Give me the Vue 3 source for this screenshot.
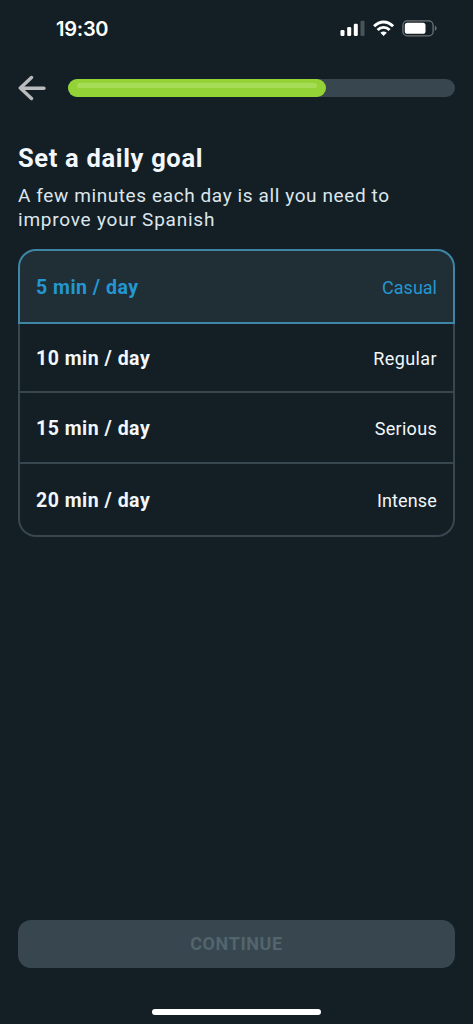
<script setup>
const options = [
  { id: 'five', time: '5 min / day', level: 'Casual', selected: true },
  { id: 'ten', time: '10 min / day', level: 'Regular' },
  { id: 'fifteen', time: '15 min / day', level: 'Serious' },
  { id: 'twenty', time: '20 min / day', level: 'Intense' },
]
const progress = 66.7
</script>

<template>
  <main class="screen">
    <header class="status">
      <span class="clock">19:30</span>
      <svg class="indicators" width="98" height="18" viewBox="0 0 98 18">
        <g fill="#fff">
          <rect x="0.5" y="10" width="4" height="6" rx="1.2" />
          <rect x="7.2" y="7" width="4" height="9" rx="1.2" />
          <rect x="13.8" y="3.8" width="4" height="12.2" rx="1.2" />
          <rect x="20.5" y="0.7" width="4" height="15.3" rx="1.2" fill="#48535a" />
        </g>
        <g fill="none" stroke="#fff" stroke-width="2.9">
          <path d="M34.1 6.3C39.6 0.6 47.6 0.6 53.1 6.3" />
          <path d="M37.6 10C41.1 6.5 46.1 6.5 49.6 10" />
        </g>
        <path d="M40.4 12.7Q43.6 10.1 46.8 12.7L43.6 16Z" fill="#fff" />
        <rect x="62.9" y="0.9" width="30.2" height="14.9" rx="4.4" fill="none" stroke="#6c7479" stroke-width="1.3" />
        <rect x="64.8" y="2.8" width="20.7" height="11" rx="2.6" fill="#fff" />
        <path d="M94.9 5.6Q96.6 6.5 96.6 8.3T94.9 11Z" fill="#6c7479" />
      </svg>
    </header>

    <nav class="topbar">
      <svg class="back" width="28" height="26" viewBox="0 0 28 26">
        <path d="M13.5 2.5L2.3 13L13.5 23.5M3 13.3H26" fill="none" stroke="#b9bbbd" stroke-width="3.4" stroke-linecap="round" stroke-linejoin="round" />
      </svg>
      <div class="track">
        <div class="fill" :style="{ width: progress + '%' }"><div class="shine"></div></div>
      </div>
    </nav>

    <h1 class="title">Set a daily goal</h1>
    <p class="subtitle"><span class="line first">A few minutes each day is all you need to</span> <span class="line second">improve your Spanish</span></p>

    <ul class="options">
      <li v-for="o in options" :key="o.id" class="option" :class="{ selected: o.selected }">
        <span class="time">{{ o.time }}</span>
        <span class="level" :class="o.id">{{ o.level }}</span>
      </li>
    </ul>

    <button class="continue" disabled>CONTINUE</button>
    <div class="home"></div>
  </main>
</template>

<style>
body {
  background: #141f25;
}
</style>

<style scoped>
.screen {
  box-sizing: border-box;
  height: 1024px;
  width: 473px;
  padding: 0 18px;
  display: flex;
  flex-direction: column;
  background: #141f25;
  color: #f1f7fb;
  font-family: Roboto, "Liberation Sans", sans-serif;
  overflow: hidden;
}
.status {
  height: 57px;
  flex: none;
  display: flex;
  justify-content: space-between;
  padding: 0 17px 0 38px;
}
.clock {
  margin-top: 17px;
  font: 600 20px/24px Inter, sans-serif;
  letter-spacing: -0.25px;
  color: #fff;
}
.indicators {
  margin-top: 20px;
}
.topbar {
  height: 62px;
  flex: none;
  display: flex;
  align-items: center;
}
.back {
  flex: none;
  margin-right: 21.5px;
}
.track {
  flex: 1;
  height: 18px;
  border-radius: 9px;
  background: #38464f;
}
.fill {
  box-sizing: border-box;
  height: 18px;
  padding: 4px 9px;
  border-radius: 9px;
  background: #94d336;
}
.shine {
  height: 5px;
  border-radius: 2.5px;
  background: #a7dc59;
}
.title {
  margin: 24px 0 0;
  font-size: 25.5px;
  line-height: 30px;
  font-weight: 700;
  letter-spacing: 0.67px;
}
.subtitle {
  margin: 11px 0 0;
  font-size: 19px;
  line-height: 24.3px;
  color: #dce6ec;
}
.line {
  display: block;
  white-space: nowrap;
}
.first {
  letter-spacing: 0.6px;
}
.second {
  letter-spacing: 0.77px;
}
.options {
  list-style: none;
  box-sizing: border-box;
  height: 287.5px;
  flex: none;
  margin: 16.5px 0 0;
  padding: 0;
}
.option {
  box-sizing: border-box;
  height: 71px;
  padding: 2px 16px 0;
  border: 2px solid #38464f;
  border-top: 0;
  display: flex;
  align-items: center;
  justify-content: space-between;
}
.option.selected {
  height: 75px;
  border: 2px solid #3f85a6;
  border-radius: 18px 18px 0 0;
  background: #202f36;
  color: #2496d1;
}
.option:nth-child(2) {
  height: 68.5px;
}
.option:last-child {
  height: 73px;
  border-radius: 0 0 18px 18px;
}
.time {
  font-size: 19.5px;
  font-weight: 700;
  letter-spacing: 0.5px;
}
.level {
  font-size: 18px;
}
.level.ten {
  letter-spacing: 0.4px;
}
.level.fifteen {
  letter-spacing: 0.3px;
}
.level.twenty {
  letter-spacing: 0.15px;
}
.continue {
  height: 48px;
  flex: none;
  margin-top: auto;
  padding: 0;
  border: 0;
  border-radius: 13px;
  background: #38464f;
  color: #52656d;
  font: 700 18px/48px Roboto, sans-serif;
  letter-spacing: 0.6px;
}
.home {
  width: 169px;
  height: 6px;
  flex: none;
  margin: 41px auto 9px;
  border-radius: 3px;
  background: #fff;
}
</style>
